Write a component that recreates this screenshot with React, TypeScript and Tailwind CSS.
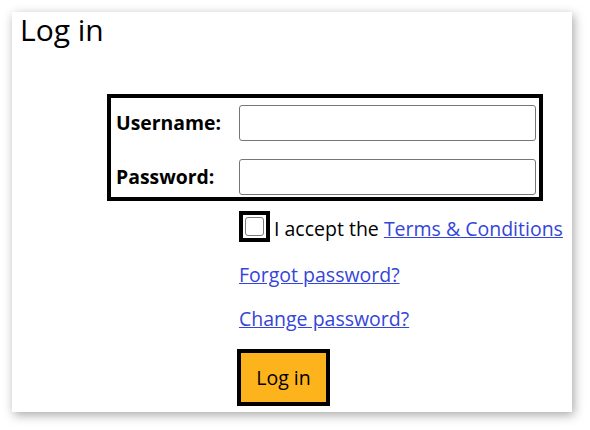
import { useState } from "react";

export default function App() {
  const [accepted, setAccepted] = useState(false);
  const [username, setUsername] = useState("");
  const [password, setPassword] = useState("");

  return (
    <div className="min-h-screen bg-white p-[12px] font-['Open_Sans',sans-serif] text-black">
      <div className="w-[560px] h-[400px] bg-white shadow-[2px_3px_10px_rgba(0,0,0,0.35)] pl-[8px]">
        <h1 className="text-[30px] leading-[36px] font-normal">Log in</h1>

        <div className="ml-[87px] mt-[46px]">
          <div className="w-[436px] border-4 border-black pt-[7px] pb-[2px] flex flex-col gap-[18px]">
            <div className="flex items-center">
              <label className="w-[128px] pl-[5px] text-[19.4px] font-bold leading-[36px]">Username:</label>
              <input
                className="w-[297px] h-[36px] border border-[#767676] rounded-[3px] px-2 text-[18px] outline-none"
                value={username}
                onChange={(e) => setUsername(e.target.value)}
              />
            </div>
            <div className="flex items-center">
              <label className="w-[128px] pl-[5px] text-[19.4px] font-bold leading-[36px]">Password:</label>
              <input
                type="password"
                className="w-[297px] h-[36px] border border-[#767676] rounded-[3px] px-2 text-[18px] outline-none"
                value={password}
                onChange={(e) => setPassword(e.target.value)}
              />
            </div>
          </div>

          <div className="ml-[132px] mt-[10px] flex flex-col items-start text-[19.5px] leading-[27px]">
            <div className="flex items-start gap-[4px]">
              <button
                onClick={() => setAccepted(!accepted)}
                className="w-[31px] h-[31px] border-4 border-black bg-white flex items-center justify-center"
              >
                <span className="w-[19px] h-[19px] border-[1.5px] border-[#7a7a7a] rounded-[3px] bg-white flex items-center justify-center text-[13px] leading-none">
                  {accepted ? "✓" : ""}
                </span>
              </button>
              <span className="mt-[4px]">
                I accept the{" "}
                <a href="#" className="text-[#3445d8] underline">Terms &amp; Conditions</a>
              </span>
            </div>
            <a href="#" className="mt-[19px] text-[#3445d8] underline">Forgot password?</a>
            <a href="#" className="mt-[17px] text-[#3445d8] underline">Change password?</a>
            <button className="mt-[17px] -ml-[2px] w-[93px] h-[57px] border-4 border-black bg-[#fdb31b] text-[19.5px] leading-[27px]">
              Log in
            </button>
          </div>
        </div>
      </div>
    </div>
  );
}
